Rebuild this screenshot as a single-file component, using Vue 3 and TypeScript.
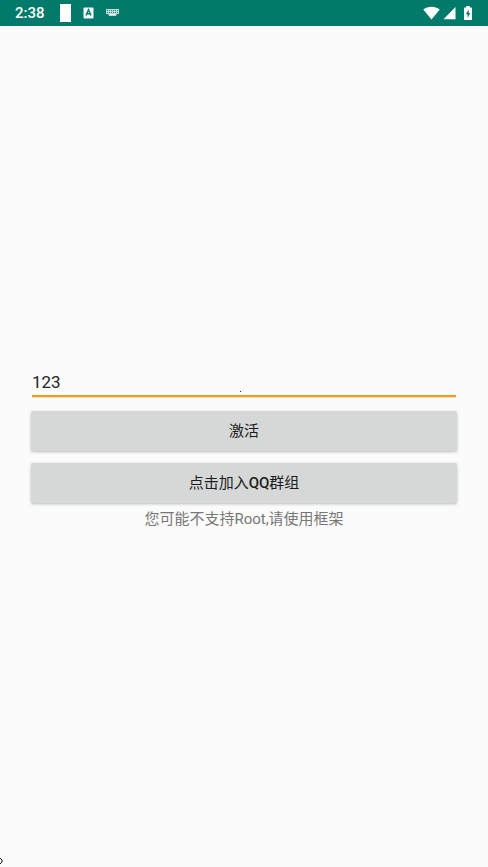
<script setup lang="ts">
import { ref } from 'vue'

const code = ref<string>('123')
const time = '2:38'
</script>

<template>
  <div class="screen">
    <header class="status">
      <div class="group left">
        <span class="time">{{ time }}</span>
        <span class="block"></span>
        <svg class="letter" width="11" height="12" viewBox="0 0 11 12" aria-hidden="true">
          <rect width="10" height="11" x="0.5" y="0.5" rx="1" fill="#f4fbfa" />
          <path d="M3 8.4 L5.5 2.8 L8 8.4 M4 6.7 H7" fill="none" stroke="#087a6c" stroke-width="1.4" />
        </svg>
        <svg class="keys" width="13" height="8" viewBox="0 0 13 8" aria-hidden="true">
          <path d="M0 0H13V5H11L10 7H3L2 5H0Z" fill="#b9dcd7" />
          <path d="M1 1.5H12M1 3.5H12" stroke="#2b8b80" stroke-width="1" stroke-dasharray="1 1" />
          <path d="M4 5.5H9" stroke="#ffffff" stroke-width="1" />
        </svg>
      </div>
      <div class="group right">
        <svg width="17" height="14" viewBox="0 0 17 14" aria-hidden="true">
          <path d="M0.3 3.5C5 -0.2 12 -0.2 16.7 3.5L8.5 13.6Z" fill="#ffffff" />
        </svg>
        <svg width="13" height="14" viewBox="0 0 13 14" aria-hidden="true">
          <path d="M0.5 13.3L12.5 1V13.3Z" fill="#ffffff" />
        </svg>
        <svg class="battery" width="8" height="14" viewBox="0 0 8 14" aria-hidden="true">
          <path d="M2.3 0H5.7V1.4H7.2Q8 1.4 8 2.2V13.2Q8 14 7.2 14H0.8Q0 14 0 13.2V2.2Q0 1.4 0.8 1.4H2.3Z" fill="#ffffff" />
          <path d="M4.7 3.5L1.8 8.3H3.6V12L6.3 7.1H4.7Z" fill="#087a6c" />
        </svg>
      </div>
    </header>

    <main class="content">
      <div class="field">
        <input v-model="code" class="entry" type="text" aria-label="激活码" />
        <span class="speck"></span>
      </div>
      <button class="action" type="button">激活</button>
      <button class="action" type="button">点击加入<span class="latin">QQ</span>群组</button>
      <p class="hint">您可能不支持Root,请使用框架</p>
    </main>

    <svg class="corner" width="3" height="6" viewBox="0 0 3 6" aria-hidden="true">
      <path d="M0 0.5H1M1 1.5H2M2 2V4M1 4.5H2M0 5.5H1" fill="none" stroke="#111111" />
    </svg>
  </div>
</template>

<style>
body {
  margin: 0;
  background: #fbfbfb;
}
</style>

<style scoped>
.screen {
  position: relative;
  display: flex;
  flex-direction: column;
  min-height: 100vh;
  background: #fbfbfb;
  font-family: Roboto, "Noto Sans CJK SC", sans-serif;
}

.status {
  display: flex;
  align-items: center;
  justify-content: space-between;
  box-sizing: border-box;
  height: 26px;
  padding: 0 16px 0 15px;
  background: #027a6b;
  color: #ffffff;
}

.group {
  display: flex;
  align-items: center;
}

.left {
  gap: 12px;
}

.right {
  gap: 3px;
}

.battery {
  margin-left: 5px;
}

.time {
  margin-right: 3px;
  font-size: 15px;
  font-weight: 500;
  line-height: 26px;
}

.block {
  width: 11px;
  height: 18px;
  background: #ffffff;
}

.content {
  display: flex;
  flex: 1;
  flex-direction: column;
  justify-content: center;
  padding: 0 31px;
}

.field {
  position: relative;
  margin: 0 1px 14px;
}

.entry {
  display: block;
  box-sizing: border-box;
  width: 100%;
  height: 32px;
  padding: 4px 0 0;
  border: 0;
  border-bottom: 2px solid #ec9c28;
  border-radius: 0;
  outline: 0;
  background: transparent;
  box-shadow: 0 1px 0 #fbdfa8;
  color: #242424;
  font-family: inherit;
  font-size: 17px;
}

.speck {
  position: absolute;
  bottom: 5px;
  left: 49%;
  width: 1px;
  height: 1px;
  background: #222222;
}

.action {
  height: 40px;
  margin-bottom: 12px;
  padding: 0;
  border: 0;
  border-radius: 2px;
  background: #d6d8d7;
  box-shadow: 0 1px 3px rgba(0, 0, 0, 0.26);
  color: #1c1c1c;
  font-family: inherit;
  font-size: 15px;
  font-weight: 400;
  line-height: 40px;
}

.latin {
  font-weight: 500;
}

.hint {
  margin: -6px 0 0;
  color: #777777;
  font-size: 15px;
  line-height: 20px;
  text-align: center;
}

.corner {
  position: absolute;
  bottom: 3px;
  left: 0;
}
</style>
